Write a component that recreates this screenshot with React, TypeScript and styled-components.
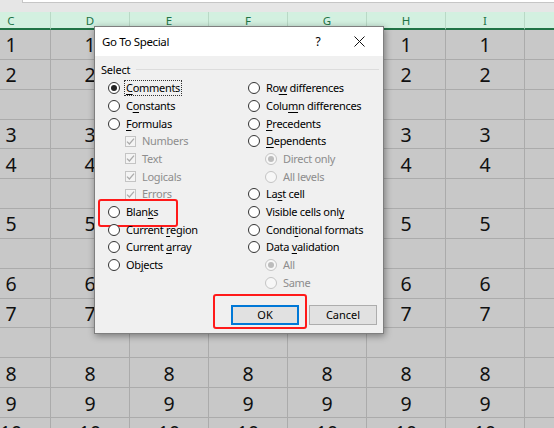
import React from "react";
import styled, { createGlobalStyle, css } from "styled-components";

const GlobalStyle = createGlobalStyle`
  html, body {
    margin: 0;
    padding: 0;
    overflow: hidden;
    background: #c8c8c8;
  }
  * {
    box-sizing: border-box;
  }
`;

const UI_FONT = `"Noto Sans", "Open Sans", Arial, sans-serif`;

const Page = styled.div`
  position: relative;
  width: 554px;
  height: 428px;
  overflow: hidden;
  background: #c8c8c8;
`;

const TopStrip = styled.div`
  height: 12px;
  background: #e6e6e6;
  padding-left: 22px;
`;

const FormulaBox = styled.div`
  height: 3px;
  background: #fff;
  border-left: 1px solid #c6c6c6;
  border-bottom: 1px solid #c6c6c6;
`;

const Sheet = styled.div`
  display: grid;
  grid-template-columns: repeat(8, 79px);
  grid-template-rows: 18px;
  grid-auto-rows: 29.85px;
  margin-left: -28px;
`;

const HeaderCell = styled.div`
  display: flex;
  align-items: center;
  justify-content: center;
  background: #d3f0e0;
  border-right: 1px solid #b9d9c6;
  border-bottom: 2px solid #217346;
  color: #217346;
  font-family: ${UI_FONT};
  font-size: 11.5px;
  padding-top: 1px;
`;

const Cell = styled.div`
  display: flex;
  align-items: center;
  justify-content: center;
  background: #c8c8c8;
  border-right: 1px solid #ababab;
  border-bottom: 1px solid #ababab;
  color: #111;
  font-family: ${UI_FONT};
  font-size: 19.5px;
  padding-top: 1px;
`;

const Dialog = styled.div`
  position: absolute;
  left: 94px;
  top: 26px;
  width: 290px;
  display: flex;
  flex-direction: column;
  background: #f0f0f0;
  border: 1px solid #7f7f7f;
  box-shadow: 1px 2px 7px rgba(0, 0, 0, 0.4);
  font-family: ${UI_FONT};
  color: #000;
`;

const TitleBar = styled.div`
  height: 29px;
  display: flex;
  align-items: center;
  background: #fff;
  padding-left: 7px;
`;

const Title = styled.div`
  flex: 1;
  font-size: 11.5px;
  letter-spacing: -0.35px;
`;

const HelpMark = styled.div`
  width: 42px;
  text-align: center;
  font-size: 12px;
`;

const CloseButton = styled.div`
  width: 40px;
  margin-right: 4px;
  display: flex;
  justify-content: center;
`;

const Body = styled.div`
  padding: 5px 4px 8px 6px;
  display: flex;
  flex-direction: column;
`;

const GroupHead = styled.div`
  height: 16px;
  display: flex;
  align-items: center;
  gap: 6px;
  font-size: 11px;
  letter-spacing: -0.2px;
`;

const Rule = styled.div`
  flex: 1;
  height: 1px;
  background: #dcdcdc;
`;

const Columns = styled.div`
  display: grid;
  grid-template-columns: 140px 1fr;
  padding-left: 7px;
  margin-top: 2.4px;
`;

const Column = styled.div`
  display: flex;
  flex-direction: column;
`;

const Option = styled.div<{ $indent?: boolean }>`
  position: relative;
  height: 17.7px;
  display: flex;
  align-items: center;
  gap: 5px;
  padding-left: ${(p) => (p.$indent ? "17px" : "0")};
  font-size: 11px;
  letter-spacing: -0.3px;
`;

const Mark = styled.div<{ $left: number; $top: number; $w: number; $h: number }>`
  position: absolute;
  left: ${(p) => p.$left}px;
  top: ${(p) => p.$top}px;
  width: ${(p) => p.$w}px;
  height: ${(p) => p.$h}px;
  border: 2px solid #ff1a1a;
  border-radius: 3px;
  pointer-events: none;
`;

const Radio = styled.span<{ $checked?: boolean; $disabled?: boolean }>`
  width: 12px;
  height: 12px;
  flex: none;
  border-radius: 50%;
  border: 1px solid ${(p) => (p.$disabled ? "#c4c4c4" : "#333")};
  background: ${(p) => (p.$disabled ? "#f7f7f7" : "#fff")};
  display: flex;
  align-items: center;
  justify-content: center;
  ${(p) =>
    p.$checked &&
    css`
      &::after {
        content: "";
        width: 6px;
        height: 6px;
        border-radius: 50%;
        background: ${p.$disabled ? "#bcbcbc" : "#222"};
      }
    `}
`;

const CheckBox = styled.span`
  width: 11px;
  height: 11px;
  flex: none;
  border: 1px solid #c4c4c4;
  background: #f4f4f4;
  display: flex;
  align-items: center;
  justify-content: center;
`;

const Label = styled.span<{ $disabled?: boolean; $focused?: boolean }>`
  color: ${(p) => (p.$disabled ? "#8d8d8d" : "#000")};
  padding: 0 1px;
  line-height: 14px;
  outline: ${(p) => (p.$focused ? "1px dotted #333" : "none")};
  white-space: nowrap;
`;

const Key = styled.span`
  text-decoration: underline;
  text-underline-offset: 2px;
`;

const ButtonRow = styled.div`
  display: flex;
  justify-content: flex-end;
  gap: 10px;
  margin-top: 13px;
  padding-right: 2px;
`;

const Button = styled.div<{ $default?: boolean }>`
  position: relative;
  width: 68px;
  height: 20px;
  display: flex;
  align-items: center;
  justify-content: center;
  background: #e1e1e1;
  border: 1px solid ${(p) => (p.$default ? "#0078d7" : "#adadad")};
  box-shadow: ${(p) => (p.$default ? "inset 0 0 0 1px #0078d7" : "none")};
  font-size: 11px;
`;

type Item = {
  label: React.ReactNode;
  kind: "radio" | "check";
  checked?: boolean;
  disabled?: boolean;
  indent?: boolean;
  focused?: boolean;
  mark?: boolean;
};

const u = (before: string, key: string, after: string) => (
  <>
    {before}
    <Key>{key}</Key>
    {after}
  </>
);

const leftItems: Item[] = [
  { label: u("", "C", "omments"), kind: "radio", checked: true, focused: true },
  { label: u("C", "o", "nstants"), kind: "radio" },
  { label: u("", "F", "ormulas"), kind: "radio" },
  { label: "Numbers", kind: "check", checked: true, disabled: true, indent: true },
  { label: "Text", kind: "check", checked: true, disabled: true, indent: true },
  { label: "Logicals", kind: "check", checked: true, disabled: true, indent: true },
  { label: "Errors", kind: "check", checked: true, disabled: true, indent: true },
  { label: u("Blan", "k", "s"), kind: "radio", mark: true },
  { label: u("Current ", "r", "egion"), kind: "radio" },
  { label: u("Current ", "a", "rray"), kind: "radio" },
  { label: u("Ob", "j", "ects"), kind: "radio" },
];

const rightItems: Item[] = [
  { label: u("Ro", "w", " differences"), kind: "radio" },
  { label: u("Colu", "m", "n differences"), kind: "radio" },
  { label: u("", "P", "recedents"), kind: "radio" },
  { label: u("", "D", "ependents"), kind: "radio" },
  { label: "Direct only", kind: "radio", checked: true, disabled: true, indent: true },
  { label: "All levels", kind: "radio", disabled: true, indent: true },
  { label: u("La", "s", "t cell"), kind: "radio" },
  { label: u("Visible cells onl", "y", ""), kind: "radio" },
  { label: u("Condi", "t", "ional formats"), kind: "radio" },
  { label: u("Data ", "v", "alidation"), kind: "radio" },
  { label: "All", kind: "radio", checked: true, disabled: true, indent: true },
  { label: "Same", kind: "radio", disabled: true, indent: true },
];

const columns = ["C", "D", "E", "F", "G", "H", "I", "J"];
const values = ["1", "2", "", "3", "4", "", "5", "", "6", "7", "", "8", "9", "10"];

const CheckMark = () => (
  <svg width="9" height="9" viewBox="0 0 9 9">
    <path d="M1 4.6 L3.4 7 L8 1.6" fill="none" stroke="#ababab" strokeWidth="1.3" />
  </svg>
);

const CloseIcon = () => (
  <svg width="11" height="11" viewBox="0 0 11 11">
    <path d="M0.5 0.5 L10.5 10.5 M10.5 0.5 L0.5 10.5" stroke="#111" strokeWidth="1" />
  </svg>
);

const OptionLine = ({ item }: { item: Item }) => (
  <Option $indent={item.indent}>
    {item.kind === "radio" ? (
      <Radio $checked={item.checked} $disabled={item.disabled} />
    ) : (
      <CheckBox>{item.checked && <CheckMark />}</CheckBox>
    )}
    <Label $disabled={item.disabled} $focused={item.focused}>
      {item.label}
    </Label>
    {item.mark && <Mark $left={-10} $top={-4} $w={80} $h={28} />}
  </Option>
);

export default function App() {
  return (
    <Page>
      <GlobalStyle />
      <TopStrip>
        <FormulaBox />
      </TopStrip>
      <Sheet>
        {columns.map((c) => (
          <HeaderCell key={c}>{c === "J" ? "" : c}</HeaderCell>
        ))}
        {values.map((v, r) =>
          columns.map((c) => <Cell key={`${c}${r}`}>{c === "J" ? "" : v}</Cell>)
        )}
      </Sheet>

      <Dialog>
        <TitleBar>
          <Title>Go To Special</Title>
          <HelpMark>?</HelpMark>
          <CloseButton>
            <CloseIcon />
          </CloseButton>
        </TitleBar>
        <Body>
          <GroupHead>
            <span>Select</span>
            <Rule />
          </GroupHead>
          <Columns>
            <Column>
              {leftItems.map((item, i) => (
                <OptionLine key={i} item={item} />
              ))}
            </Column>
            <Column>
              {rightItems.map((item, i) => (
                <OptionLine key={i} item={item} />
              ))}
            </Column>
          </Columns>
          <ButtonRow>
            <Button $default>
              OK
              <Mark $left={-19} $top={-12} $w={94} $h={35} />
            </Button>
            <Button>Cancel</Button>
          </ButtonRow>
        </Body>
      </Dialog>
    </Page>
  );
}
